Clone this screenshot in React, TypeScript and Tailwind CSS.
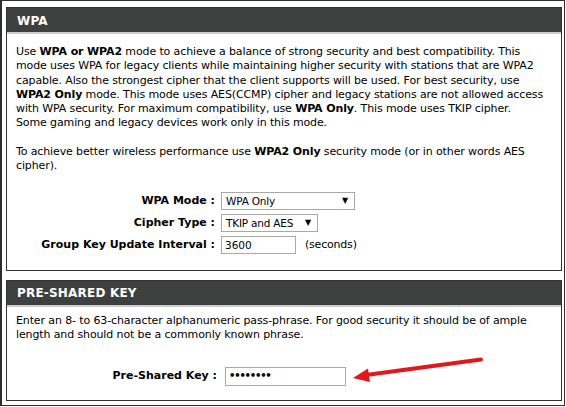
import React from "react";

const Select = ({ value, width }: { value: string; width: string }) => (
  <div
    className={`flex items-center justify-between h-[18px] ${width} border border-[#a8a8a8] bg-white pl-[4px] pr-[6px] text-[10.5px] tracking-[-0.2px] text-black`}
  >
    <span>{value}</span>
    <span className="text-[8px] leading-none">▼</span>
  </div>
);

const Header = ({ title, pt }: { title: string; pt: string }) => (
  <div
    className={`h-[26px] bg-[#3e4040] border-b-2 border-[#cdcdcd] pl-[10px] ${pt} text-white font-bold text-[12px] leading-[16px] tracking-[0.2px]`}
  >
    {title}
  </div>
);

export default function App() {
  return (
    <div className="relative w-[566px] h-[407px] bg-white overflow-hidden font-['DejaVu_Sans',sans-serif] text-black">
      <div className="w-[565px] h-[406px] border border-l-2 border-[#2e2e2e] pt-[6px] pl-[4px] pr-[2px]">
        {/* WPA */}
        <div className="border border-[#333]">
          <Header title="WPA" pt="pt-[5px]" />
          <div className="pt-[11px] pl-[9px] pb-[14px] text-[11px] leading-[14.3px] tracking-[-0.12px] whitespace-nowrap">
            <p>
              Use <b>WPA or WPA2</b> mode to achieve a balance of strong security and best compatibility. This
              <br />
              mode uses WPA for legacy clients while maintaining higher security with stations that are WPA2
              <br />
              capable. Also the strongest cipher that the client supports will be used. For best security, use
              <br />
              <b>WPA2 Only</b> mode. This mode uses AES(CCMP) cipher and legacy stations are not allowed access
              <br />
              with WPA security. For maximum compatibility, use <b>WPA Only</b>. This mode uses TKIP cipher.
              <br />
              Some gaming and legacy devices work only in this mode.
            </p>
            <p className="mt-[14.3px]">
              To achieve better wireless performance use <b>WPA2 Only</b> security mode (or in other words AES
              <br />
              cipher).
            </p>
            <div className="mt-[16px] grid grid-cols-[199px_auto] gap-x-[6px] tracking-normal">
              <div className="h-[22px] flex items-center justify-end font-bold">WPA Mode :</div>
              <div className="h-[22px] flex items-center">
                <Select value="WPA Only" width="w-[134px]" />
              </div>
              <div className="h-[22px] flex items-center justify-end font-bold">Cipher Type :</div>
              <div className="h-[22px] flex items-center">
                <Select value="TKIP and AES" width="w-[97px]" />
              </div>
              <div className="h-[22px] flex items-center justify-end font-bold">Group Key Update Interval :</div>
              <div className="h-[22px] flex items-center gap-[9px]">
                <div className="h-[18px] w-[75px] border border-[#a8a8a8] pl-[3px] text-[10.5px] leading-[16px]">
                  3600
                </div>
                <span className="tracking-[-0.2px]">(seconds)</span>
              </div>
            </div>
          </div>
        </div>

        {/* Pre-shared key */}
        <div className="mt-[9px] border border-[#333]">
          <Header title="PRE-SHARED KEY" pt="pt-[4px]" />
          <div className="pt-[7px] pl-[9px] pb-[13px] text-[11px] leading-[14.3px] tracking-[-0.12px] whitespace-nowrap">
            <p>
              Enter an 8- to 63-character alphanumeric pass-phrase. For good security it should be of ample
              <br />
              length and should not be a commonly known phrase.
            </p>
            <div className="mt-[23px] grid grid-cols-[201px_auto] gap-x-[8px] tracking-normal">
              <div className="h-[22px] flex items-center justify-end font-bold">Pre-Shared Key :</div>
              <div className="h-[22px] flex items-center">
                <div className="h-[19px] w-[121px] border border-[#a8a8a8] pl-[3px] flex items-center text-[10px] font-bold tracking-[-1.2px]">
                  ••••••••
                </div>
              </div>
            </div>
          </div>
        </div>
      </div>

      {/* red annotation arrow */}
      <svg className="absolute left-0 top-0 pointer-events-none" width="566" height="407" viewBox="0 0 566 407">
        <path d="M481 359.5 L366 375" stroke="#e0181c" strokeWidth="4" strokeLinecap="round" fill="none" />
        <polygon points="353,378 368,368.5 370,382" fill="#e0181c" />
      </svg>
    </div>
  );
}
